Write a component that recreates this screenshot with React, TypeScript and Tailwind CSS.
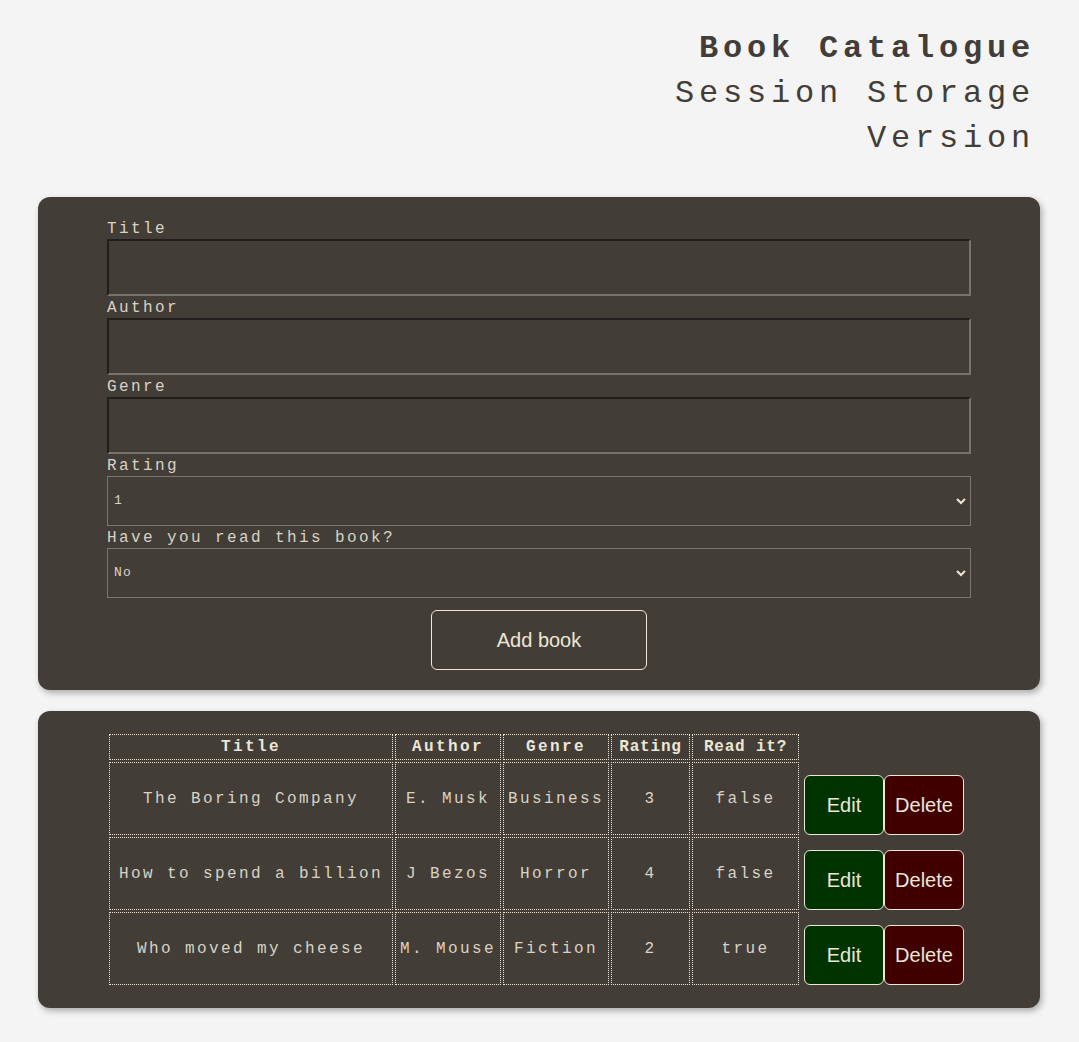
import { useState } from "react";

type Book = {
  title: string;
  author: string;
  genre: string;
  rating: number;
  read: boolean;
};

const initialBooks: Book[] = [
  { title: "The Boring Company", author: "E. Musk", genre: "Business", rating: 3, read: false },
  { title: "How to spend a billion", author: "J Bezos", genre: "Horror", rating: 4, read: false },
  { title: "Who moved my cheese", author: "M. Mouse", genre: "Fiction", rating: 2, read: true },
];

const mono = "font-['Liberation_Mono',_'DejaVu_Sans_Mono',_monospace]";

function Chevron() {
  return (
    <svg
      className="pointer-events-none absolute right-[3px] top-1/2 -translate-y-1/2"
      width="14"
      height="14"
      viewBox="0 0 14 14"
      fill="none"
    >
      <path d="M3 5 L7 9 L11 5" stroke="#ece6d6" strokeWidth="2" />
    </svg>
  );
}

export default function App() {
  const [books] = useState<Book[]>(initialBooks);
  const [rating, setRating] = useState("1");
  const [read, setRead] = useState("No");

  const labelCls = "block h-[22px] leading-[24px] text-[16px] tracking-[0.15em] text-[#d9d3c5]";
  const inputCls =
    "block w-full h-[57px] bg-transparent border-2 border-t-[#211e1b] border-l-[#211e1b] border-b-[#77736d] border-r-[#77736d] text-[#ece6d6] px-2 outline-none";
  const selectCls =
    "block w-full h-[50px] appearance-none bg-transparent border border-[#7a766f] text-[#d9d3c5] text-[13px] tracking-[0.1em] pl-[6px] outline-none";
  const cell = "border border-dotted border-[#ece6d6] text-center";

  return (
    <div className={`min-h-screen bg-[#f4f4f4] ${mono} pt-[26px] pb-[36px]`}>
      {/* Header */}
      <div className="pr-[44px] text-right text-[32px] leading-[45px] tracking-[0.15em] text-[#433d37]">
        <div className="font-bold">Book Catalogue</div>
        <div>Session Storage</div>
        <div>Version</div>
      </div>

      {/* Form */}
      <div className="ml-[38px] mr-[39px] mt-[36px] rounded-xl bg-[#433d37] py-5 shadow-[2px_3px_6px_rgba(0,0,0,0.3)]">
        <div className="mx-auto w-[864px]">
          <label className={labelCls}>Title</label>
          <input className={inputCls} />
          <label className={labelCls}>Author</label>
          <input className={inputCls} />
          <label className={labelCls}>Genre</label>
          <input className={inputCls} />
          <label className={labelCls}>Rating</label>
          <div className="relative">
            <select className={selectCls} value={rating} onChange={(e) => setRating(e.target.value)}>
              {[1, 2, 3, 4, 5].map((n) => (
                <option key={n} value={n} className="bg-[#433d37]">
                  {n}
                </option>
              ))}
            </select>
            <Chevron />
          </div>
          <label className={labelCls}>Have you read this book?</label>
          <div className="relative">
            <select className={selectCls} value={read} onChange={(e) => setRead(e.target.value)}>
              <option className="bg-[#433d37]">No</option>
              <option className="bg-[#433d37]">Yes</option>
            </select>
            <Chevron />
          </div>
          <div className="mt-3 flex justify-center">
            <button className="h-[60px] w-[216px] rounded-md border border-[#ece6d6] font-['Liberation_Sans',_Arial,_sans-serif] text-[20px] text-[#ece6d6]">
              Add book
            </button>
          </div>
        </div>
      </div>

      {/* Table */}
      <div className="ml-[38px] mr-[39px] mt-[21px] rounded-xl bg-[#433d37] py-[21px] shadow-[2px_3px_6px_rgba(0,0,0,0.3)]">
        <table className="ml-[69px] border-separate border-spacing-[2px] text-[16px] tracking-[0.15em]">
          <thead>
            <tr className="h-[26px] text-[#ece6d6]">
              <th className={`${cell} w-[284px]`}>Title</th>
              <th className={`${cell} w-[106px]`}>Author</th>
              <th className={`${cell} w-[106px]`}>Genre</th>
              <th className={`${cell} w-[79px] tracking-[0.05em]`}>Rating</th>
              <th className={`${cell} w-[107px] tracking-[0.05em]`}>Read it?</th>
              <th className="w-[164px]"></th>
            </tr>
          </thead>
          <tbody className="text-[#d9d3c5]">
            {books.map((b) => (
              <tr key={b.title} className="h-[73px]">
                <td className={cell}>{b.title}</td>
                <td className={cell}>{b.author}</td>
                <td className={cell}>{b.genre}</td>
                <td className={cell}>{b.rating}</td>
                <td className={cell}>{String(b.read)}</td>
                <td className="p-0 pl-[3px] align-bottom">
                  <div className="flex font-['Liberation_Sans',_Arial,_sans-serif] text-[20px] tracking-normal text-[#ece6d6]">
                    <button className="h-[60px] w-[80px] rounded-md border border-[#ece6d6] bg-[#003300]">
                      Edit
                    </button>
                    <button className="h-[60px] w-[80px] rounded-md border border-[#ece6d6] bg-[#400000]">
                      Delete
                    </button>
                  </div>
                </td>
              </tr>
            ))}
          </tbody>
        </table>
      </div>
    </div>
  );
}
